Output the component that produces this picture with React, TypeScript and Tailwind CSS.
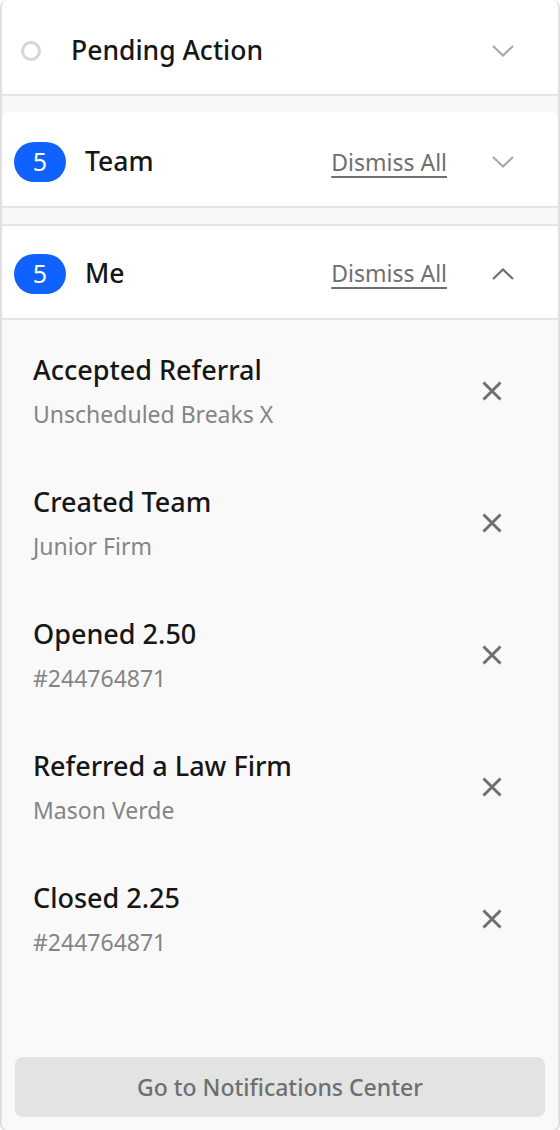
import React from "react";

const items = [
  { title: "Accepted Referral", sub: "Unscheduled Breaks X" },
  { title: "Created Team", sub: "Junior Firm" },
  { title: "Opened 2.50", sub: "#244764871" },
  { title: "Referred a Law Firm", sub: "Mason Verde" },
  { title: "Closed 2.25", sub: "#244764871" },
];

function Chevron({ up, color }: { up?: boolean; color: string }) {
  return (
    <svg width="22" height="14" viewBox="0 0 22 14" fill="none">
      <path
        d={up ? "M1 12 L11 2.5 L21 12" : "M1 2 L11 11.5 L21 2"}
        stroke={color}
        strokeWidth="2.2"
      />
    </svg>
  );
}

function CloseIcon() {
  return (
    <svg width="20" height="20" viewBox="0 0 20 20" fill="none">
      <path d="M1.5 1.5 L18.5 18.5 M18.5 1.5 L1.5 18.5" stroke="#6f6f6f" strokeWidth="3" />
    </svg>
  );
}

function Badge() {
  return (
    <span className="flex h-[40px] w-[52px] items-center justify-center rounded-full bg-[#0f62fe] text-[25px] text-white">
      5
    </span>
  );
}

export default function App() {
  return (
    <div
      className="min-h-screen w-full bg-white"
      style={{ fontFamily: "'Noto Sans', 'Open Sans', sans-serif" }}
    >
      <div className="flex flex-col overflow-hidden rounded-lg border-x-2 border-b-2 border-[#e0e0e0] bg-[#f7f7f7]">
        {/* pending */}
        <div className="flex h-[96px] items-center border-b-2 border-[#e4e4e4] bg-white pt-[8px] pr-[44px]">
          <span className="ml-[19px] h-[20px] w-[20px] rounded-full border-[3px] border-[#d6d6d6]" />
          <span className="ml-[30px] flex-1 text-[26.5px] font-medium text-[#161616]">
            Pending Action
          </span>
          <Chevron color="#a8a8a8" />
        </div>

        {/* team */}
        <div className="mt-4 flex h-[96px] items-center rounded-t-lg border-b-2 border-[#e4e4e4] bg-white pt-[6px] pr-[44px] pl-[12px]">
          <Badge />
          <span className="ml-[19px] flex-1 text-[26.5px] font-medium text-[#161616]">
            Team
          </span>
          <span className="mr-[45px] text-[23px] text-[#6f6f6f] underline underline-offset-[5px]">
            Dismiss All
          </span>
          <Chevron color="#a8a8a8" />
        </div>

        {/* me */}
        <div className="mt-4 flex h-[96px] items-center border-y-2 border-[#e4e4e4] bg-white pt-[3px] pr-[44px] pl-[12px]">
          <Badge />
          <span className="ml-[19px] flex-1 text-[26.5px] font-medium text-[#161616]">
            Me
          </span>
          <span className="mr-[45px] text-[23px] text-[#6f6f6f] underline underline-offset-[5px]">
            Dismiss All
          </span>
          <Chevron up color="#6f6f6f" />
        </div>

        <div className="flex flex-col bg-[#f9f9f9] px-[13px] pt-[5px] pb-[13px]">
          {items.map((it) => (
            <div
              key={it.title}
              className="flex h-[132px] items-center justify-between pr-[43px] pl-[18px]"
            >
              <div className="flex flex-col">
                <span className="text-[27px] leading-[34px] font-medium text-[#161616]">
                  {it.title}
                </span>
                <span className="mt-[12px] text-[23px] leading-[30px] text-[#858585]">
                  {it.sub}
                </span>
              </div>
              <CloseIcon />
            </div>
          ))}
          <button className="mt-[72px] h-[60px] w-full rounded-lg bg-[#e3e3e3] text-[23px] font-medium text-[#6f6f6f]">
            Go to Notifications Center
          </button>
        </div>
      </div>
    </div>
  );
}
